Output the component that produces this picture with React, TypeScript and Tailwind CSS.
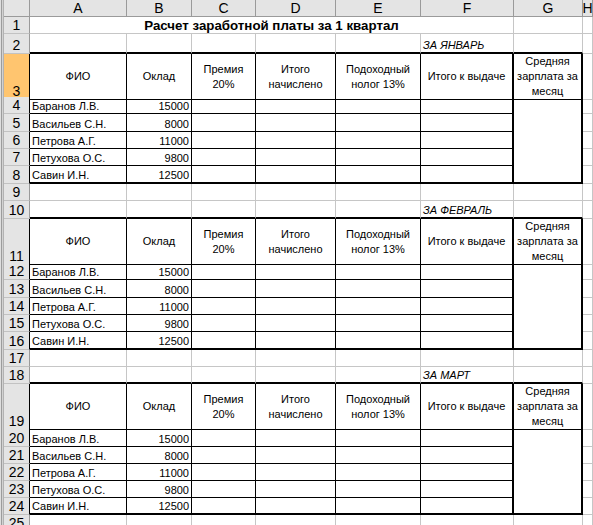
import React from "react";

type Kind = "title" | "label" | "thead" | "data" | "empty";
type RowDef = { n: number; kind: Kind; h: string; i?: number; text?: string };

const NAMES = ["Баранов Л.В.", "Васильев С.Н.", "Петрова А.Г.", "Петухова О.С.", "Савин И.Н."];
const SAL = ["15000", "8000", "11000", "9800", "12500"];
const HEAD: string[][] = [
  ["ФИО"],
  ["Оклад"],
  ["Премия", "20%"],
  ["Итого", "начислено"],
  ["Подоходный", "нолог 13%"],
  ["Итого к выдаче"],
  ["Средняя", "зарплата за", "месяц"],
];

const ROWS: RowDef[] = [
  { n: 1, kind: "title", h: "h-[17px]" },
  { n: 2, kind: "label", h: "h-[20px]", text: "ЗА ЯНВАРЬ" },
  { n: 3, kind: "thead", h: "h-[43px]" },
  { n: 4, kind: "data", h: "h-[17px]", i: 0 },
  { n: 5, kind: "data", h: "h-[18px]", i: 1 },
  { n: 6, kind: "data", h: "h-[17px]", i: 2 },
  { n: 7, kind: "data", h: "h-[17px]", i: 3 },
  { n: 8, kind: "data", h: "h-[18px]", i: 4 },
  { n: 9, kind: "empty", h: "h-[17px]" },
  { n: 10, kind: "label", h: "h-[18px]", text: "ЗА ФЕВРАЛЬ" },
  { n: 11, kind: "thead", h: "h-[44px]" },
  { n: 12, kind: "data", h: "h-[17px]", i: 0 },
  { n: 13, kind: "data", h: "h-[18px]", i: 1 },
  { n: 14, kind: "data", h: "h-[17px]", i: 2 },
  { n: 15, kind: "data", h: "h-[17px]", i: 3 },
  { n: 16, kind: "data", h: "h-[18px]", i: 4 },
  { n: 17, kind: "empty", h: "h-[17px]" },
  { n: 18, kind: "label", h: "h-[17px]", text: "ЗА МАРТ" },
  { n: 19, kind: "thead", h: "h-[45px]" },
  { n: 20, kind: "data", h: "h-[18px]", i: 0 },
  { n: 21, kind: "data", h: "h-[17px]", i: 1 },
  { n: 22, kind: "data", h: "h-[17px]", i: 2 },
  { n: 23, kind: "data", h: "h-[17px]", i: 3 },
  { n: 24, kind: "data", h: "h-[17px]", i: 4 },
  { n: 25, kind: "empty", h: "h-[17px]" },
];

const COLS = "grid shrink-0 grid-cols-[26px_97px_65px_64px_80px_85px_93px_69px_10px]";
const GRAY_R = "border-r border-r-[#c6c6c6]";
const GRAY_B = "border-b border-b-[#c6c6c6]";

function rightBorder(kind: Kind, col: number): string {
  if (kind === "thead" || kind === "data") {
    if (col <= 4) return "border-r border-r-black";
    if (col <= 6) return "border-r-2 border-r-black";
  }
  return GRAY_R;
}

function bottomBorder(kind: Kind, col: number, i?: number): string {
  if (col === 7) return GRAY_B;
  if (kind === "label") return "border-b-2 border-b-black";
  if (kind === "thead") return "border-b border-b-black";
  if (kind === "data") {
    const last = i === 4;
    if (col === 6) return last ? "border-b-2 border-b-black" : "";
    return last ? "border-b-2 border-b-black" : "border-b border-b-black";
  }
  return GRAY_B;
}

function RowHeader({ n, kind }: { n: number; kind: Kind }) {
  const selected = n === 3;
  const dark = kind === "thead" || kind === "data";
  return (
    <div
      className={
        "flex items-end justify-center pb-[1px] text-[14px] leading-[13px] border-b border-b-[#c2c2c2] border-r " +
        (dark ? "border-r-black " : "border-r-[#9a9a9a] ") +
        (selected ? "bg-[#ffc56f]" : "bg-[#e4e4e4]")
      }
    >
      {n}
    </div>
  );
}

function SheetRow({ r }: { r: RowDef }) {
  const cells: React.ReactNode[] = [];
  if (r.kind === "title") {
    cells.push(
      <div
        key="t"
        className={"col-span-6 flex items-center justify-center text-[13.3px] font-bold leading-[15px] " + GRAY_R + " " + GRAY_B}
      >
        Расчет заработной платы за 1 квартал
      </div>
    );
    cells.push(<div key="g" className={GRAY_R + " " + GRAY_B} />);
    cells.push(<div key="h" className={GRAY_R + " " + GRAY_B} />);
  } else {
    for (let c = 0; c < 8; c++) {
      const cls = rightBorder(r.kind, c) + " " + bottomBorder(r.kind, c, r.i);
      let content: React.ReactNode = null;
      let extra = "";
      if (r.kind === "label" && c === 5) {
        content = r.text;
        extra = " flex items-end pl-[2px] italic text-[11px] leading-[13px] whitespace-nowrap";
      } else if (r.kind === "thead" && c < 7) {
        content = HEAD[c].map((l, k) => <div key={k}>{l}</div>);
        extra = " flex flex-col items-center justify-center text-center text-[11px] leading-[15px] whitespace-nowrap";
      } else if (r.kind === "data" && c === 0) {
        content = NAMES[r.i ?? 0];
        extra = " flex items-end pl-[2px] pb-[1px] text-[11px] leading-[11px] whitespace-nowrap";
      } else if (r.kind === "data" && c === 1) {
        content = SAL[r.i ?? 0];
        extra = " flex items-end justify-end pr-[2px] pb-[1px] text-[11px] leading-[11px]";
      }
      cells.push(
        <div key={c} className={cls + extra}>
          {content}
        </div>
      );
    }
  }
  return (
    <div className={COLS + " " + r.h}>
      <RowHeader n={r.n} kind={r.kind} />
      {cells}
    </div>
  );
}

export default function App() {
  const letters = ["A", "B", "C", "D", "E", "F", "G", "H"];
  return (
    <div className="w-[593px] h-[525px] overflow-hidden bg-white flex items-start font-['Liberation_Sans',Arial,sans-serif] text-black">
      <div className="flex h-full shrink-0">
        <div className="w-[1px] h-full bg-[#dedede]" />
        <div className="w-[1px] h-full bg-[#9c9c9c]" />
        <div className="w-[1px] h-full bg-[#d2d2d2]" />
        <div className="w-[1px] h-full bg-[#b2b2b2]" />
      </div>
      <div className="flex flex-col shrink-0">
        <div className={COLS + " h-[17px]"}>
          <div className="bg-[#e4e4e4] border-r border-b border-[#9a9a9a]" />
          {letters.map((l) => (
            <div
              key={l}
              className="flex items-center justify-center overflow-hidden bg-[#e4e4e4] border-r border-b border-[#9a9a9a] text-[14px] leading-[14px]"
            >
              {l}
            </div>
          ))}
        </div>
        {ROWS.map((r) => (
          <SheetRow key={r.n} r={r} />
        ))}
      </div>
    </div>
  );
}
